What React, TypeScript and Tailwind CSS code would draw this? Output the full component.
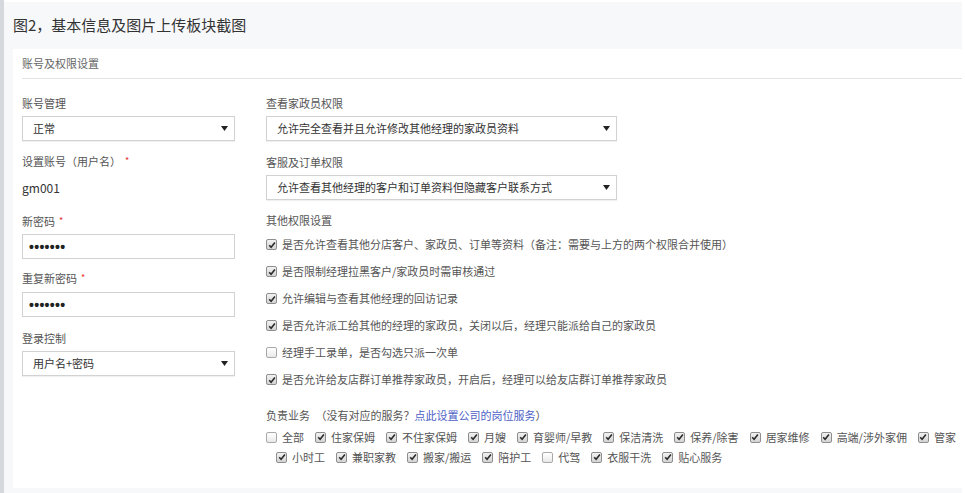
import React from 'react';

const font = "font-['Noto_Sans_CJK_SC','Noto_Sans',sans-serif]";

const CheckBox: React.FC<{ checked?: boolean }> = ({ checked }) => (
  <span
    className={`inline-flex w-[11px] h-[11px] shrink-0 items-center justify-center rounded-[2px] border ${
      checked ? 'border-[#8e8e8e] bg-gradient-to-b from-[#f2f2f2] to-[#d4d4d4]' : 'border-[#a9a9a9] bg-gradient-to-b from-[#ffffff] to-[#e9e9e9]'
    }`}
  >
    {checked && (
      <svg width="8" height="8" viewBox="0 0 8 8">
        <path d="M1.2 4.2 L3.1 6.2 L6.9 1.4" fill="none" stroke="#2b2b2b" strokeWidth="1.6" />
      </svg>
    )}
  </span>
);

const Select: React.FC<{ value: string; width: string }> = ({ value, width }) => (
  <div className={`${width} h-[25px] flex items-center justify-between border border-[#d2d2d2] bg-white shadow-[0_1px_1px_rgba(0,0,0,0.06)] pl-[10px] pr-[6px] text-[11px] text-[#333]`}>
    <span className="whitespace-nowrap">{value}</span>
    <svg width="7" height="5" viewBox="0 0 7 5">
      <path d="M0 0 L7 0 L3.5 5 Z" fill="#222" />
    </svg>
  </div>
);

const Password: React.FC = () => (
  <div className="w-[213px] h-[25px] flex items-center border border-[#d2d2d2] bg-white pl-[6px] text-[#222]">
    <span className="font-['Liberation_Sans',sans-serif] text-[14px] font-bold tracking-[0.3px] leading-none">•••••••</span>
  </div>
);

const Label: React.FC<{ text: string; required?: boolean; className?: string }> = ({ text, required, className }) => (
  <div className={`h-[16px] leading-[16px] text-[11px] text-[#555] whitespace-nowrap ${className ?? ''}`}>
    {text}
    {required && <span className="text-[#e5332a] text-[9px] align-top ml-[4px]">*</span>}
  </div>
);

const permissions = [
  { text: '是否允许查看其他分店客户、家政员、订单等资料（备注：需要与上方的两个权限合并使用）', checked: true },
  { text: '是否限制经理拉黑客户/家政员时需审核通过', checked: true },
  { text: '允许编辑与查看其他经理的回访记录', checked: true },
  { text: '是否允许派工给其他的经理的家政员，关闭以后，经理只能派给自己的家政员', checked: true },
  { text: '经理手工录单，是否勾选只派一次单', checked: false },
  { text: '是否允许给友店群订单推荐家政员，开启后，经理可以给友店群订单推荐家政员', checked: true },
];

const servicesRow1 = [
  { text: '全部', checked: false },
  { text: '住家保姆', checked: true },
  { text: '不住家保姆', checked: true },
  { text: '月嫂', checked: true },
  { text: '育婴师/早教', checked: true },
  { text: '保洁清洗', checked: true },
  { text: '保养/除害', checked: true },
  { text: '居家维修', checked: true },
  { text: '高端/涉外家佣', checked: true },
  { text: '管家', checked: true },
];

const servicesRow2 = [
  { text: '小时工', checked: true },
  { text: '兼职家教', checked: true },
  { text: '搬家/搬运', checked: true },
  { text: '陪护工', checked: true },
  { text: '代驾', checked: false },
  { text: '衣服干洗', checked: true },
  { text: '贴心服务', checked: true },
];

const ServiceItem: React.FC<{ text: string; checked: boolean }> = ({ text, checked }) => (
  <div className="flex items-center gap-[5px] mr-[11px] shrink-0">
    <CheckBox checked={checked} />
    <span className="whitespace-nowrap">{text}</span>
  </div>
);

export default function App() {
  return (
    <div className={`w-[965px] h-[493px] bg-white flex overflow-hidden ${font}`}>
      {/* left strip */}
      <div className="w-[4px] h-full bg-[#d5d9de]" />

      <div className="w-[958px] mt-[2px] bg-[#f7f8fa] flex flex-col">
        {/* Page title */}
        <div className="h-[47px] pl-[9px] flex items-center text-[15px] text-[#333]">
          图2，基本信息及图片上传板块截图
        </div>

        {/* Card */}
        <div className="ml-[9px] h-[439px] bg-white flex flex-col">
          <div className="ml-[9px] h-[30px] border-b border-[#e3e3e3] flex items-center text-[11px] text-[#666]">
            账号及权限设置
          </div>

          <div className="flex pl-[9px]">
            {/* Left column */}
            <div className="w-[213px] shrink-0 pt-[16px]">
              <Label text="账号管理" />
              <div className="mt-[5px]">
                <Select value="正常" width="w-[213px]" />
              </div>
              <Label text="设置账号（用户名）" required className="mt-[12px]" />
              <div className="mt-[11px] h-[16px] leading-[16px] text-[12px] text-[#333]">gm001</div>
              <Label text="新密码" required className="mt-[17px]" />
              <div className="mt-[5px]">
                <Password />
              </div>
              <Label text="重复新密码" required className="mt-[11px]" />
              <div className="mt-[6px]">
                <Password />
              </div>
              <Label text="登录控制" className="mt-[13px]" />
              <div className="mt-[5px]">
                <Select value="用户名+密码" width="w-[213px]" />
              </div>
            </div>

            {/* Right column */}
            <div className="ml-[31px] pt-[16px] flex-1 min-w-0">
              <Label text="查看家政员权限" />
              <div className="mt-[5px]">
                <Select value="允许完全查看并且允许修改其他经理的家政员资料" width="w-[351px]" />
              </div>
              <Label text="客服及订单权限" className="mt-[13px]" />
              <div className="mt-[5px]">
                <Select value="允许查看其他经理的客户和订单资料但隐藏客户联系方式" width="w-[351px]" />
              </div>
              <Label text="其他权限设置" className="mt-[12px]" />

              <div className="mt-[3px] flex flex-col">
                {permissions.map((p, i) => (
                  <div key={i} className="h-[27px] flex items-center gap-[5px] text-[11px] text-[#555]">
                    <CheckBox checked={p.checked} />
                    <span className="whitespace-nowrap">{p.text}</span>
                  </div>
                ))}
              </div>

              <div className="mt-[14px] h-[16px] leading-[16px] text-[11px] text-[#555] whitespace-nowrap">
                负责业务 <span className="ml-[3px]">（没有对应的服务？</span>
                <span className="text-[#4d5fc6]">点此设置公司的岗位服务</span>）
              </div>

              <div className="mt-[4px] h-[20px] flex items-center text-[11px] text-[#555]">
                {servicesRow1.map((s, i) => (
                  <ServiceItem key={i} text={s.text} checked={s.checked} />
                ))}
              </div>
              <div className="h-[20px] pl-[10px] flex items-center text-[11px] text-[#555]">
                {servicesRow2.map((s, i) => (
                  <ServiceItem key={i} text={s.text} checked={s.checked} />
                ))}
              </div>
            </div>
          </div>
        </div>
      </div>
    </div>
  );
}
